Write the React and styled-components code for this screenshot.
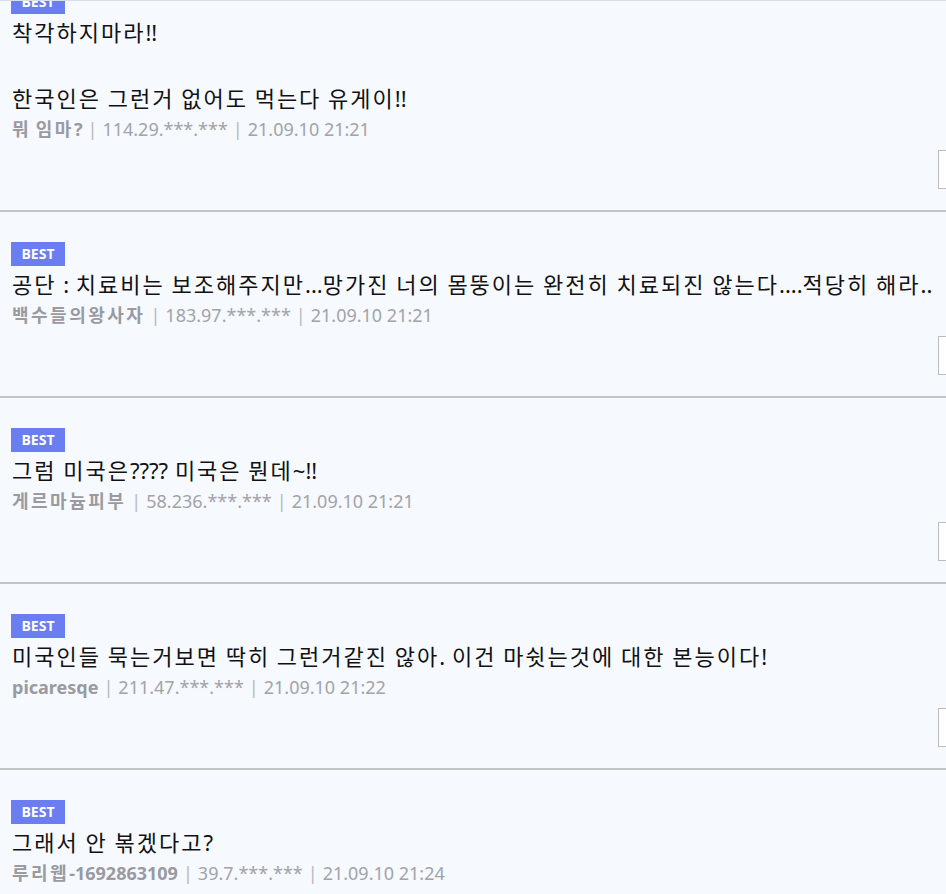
import React from "react";
import styled, { createGlobalStyle } from "styled-components";

const Global = createGlobalStyle`
  html, body { margin: 0; padding: 0; background: #f6f9fe; }
  body { font-family: "Noto Sans", "Noto Sans CJK KR", sans-serif; }
`;

const Viewport = styled.div`
  height: 894px;
  overflow: hidden;
  border-top: 1px solid #d9dde4;
  box-sizing: border-box;
  background: #f6f9fe;
`;

const List = styled.ul`
  list-style: none;
  margin: -41px 0 0;
  padding: 0;
`;

const Item = styled.li`
  padding: 30px 0 21px 12px;
  border-bottom: 2px solid #c4c4c6;
`;

const BadgeRow = styled.div`
  height: 24px;
  margin-bottom: 2px;
`;

const Badge = styled.span`
  display: inline-block;
  width: 54px;
  height: 24px;
  margin-left: -1px;
  background: #6a7ef2;
  color: #fff;
  font-family: "Open Sans", "Noto Sans", sans-serif;
  font-weight: 700;
  font-size: 14px;
  line-height: 24px;
  text-align: center;
  vertical-align: top;
`;

const Body = styled.p`
  margin: 0;
  font-family: "Noto Sans", "Noto Sans CJK KR", sans-serif;
  font-size: 22px;
  line-height: 33px;
  color: #111;
  white-space: pre-line;
  word-spacing: 1px;
`;

const Hangul = styled.span`
  font-family: "Noto Sans CJK KR", sans-serif;
  line-height: 1;
  letter-spacing: ${(p) => p.$track}px;
`;

const Meta = styled.div`
  height: 28px;
  overflow: hidden;
  font-family: "Noto Sans", "Noto Sans CJK KR", sans-serif;
  font-size: 18px;
  line-height: 28px;
  color: #a3a3a8;
  white-space: nowrap;
`;

const Name = styled.b`
  font-weight: 700;
  color: #9a9aa0;
`;

const Sep = styled.span`
  color: #b8b8bc;
  margin: 0 5px;
`;

const Actions = styled.div`
  display: flex;
  justify-content: flex-end;
  margin-top: 7px;
  margin-right: -72px;
`;

const ActionBox = styled.button`
  width: 80px;
  height: 39px;
  box-sizing: border-box;
  border: 1px solid #bcbcbc;
  background: #fff;
  padding: 0;
`;

function withHangul(text, track) {
  return text.split(/([가-힣]+)/).map((part, i) =>
    /[가-힣]/.test(part) ? (
      <Hangul key={i} $track={track}>
        {part}
      </Hangul>
    ) : (
      <React.Fragment key={i}>{part}</React.Fragment>
    )
  );
}

const comments = [
  { text: "착각하지마라!!\n\n한국인은 그런거 없어도 먹는다 유게이!!", name: "뭐 임마?", ip: "114.29.***.***", date: "21.09.10 21:21" },
  { text: "공단 : 치료비는 보조해주지만...망가진 너의 몸뚱이는 완전히 치료되진 않는다....적당히 해라..", name: "백수들의왕사자", ip: "183.97.***.***", date: "21.09.10 21:21" },
  { text: "그럼 미국은???? 미국은 뭔데~!!", name: "게르마늄피부", ip: "58.236.***.***", date: "21.09.10 21:21" },
  { text: "미국인들 묵는거보면 딱히 그런거같진 않아. 이건 마쉿는것에 대한 본능이다!", name: "picaresqe", ip: "211.47.***.***", date: "21.09.10 21:22" },
  { text: "그래서 안 볶겠다고?", name: "루리웹-1692863109", ip: "39.7.***.***", date: "21.09.10 21:24" },
];

export default function App() {
  return (
    <>
      <Global />
      <Viewport>
        <List>
          {comments.map((c, i) => (
            <Item key={i}>
              <BadgeRow>
                <Badge>BEST</Badge>
              </BadgeRow>
              <Body>{withHangul(c.text, 2)}</Body>
              <Meta>
                <Name>{withHangul(c.name, 2.5)}</Name>
                <Sep>|</Sep>
                {c.ip}
                <Sep>|</Sep>
                {c.date}
              </Meta>
              <Actions>
                <ActionBox aria-label="추천" />
              </Actions>
            </Item>
          ))}
        </List>
      </Viewport>
    </>
  );
}
